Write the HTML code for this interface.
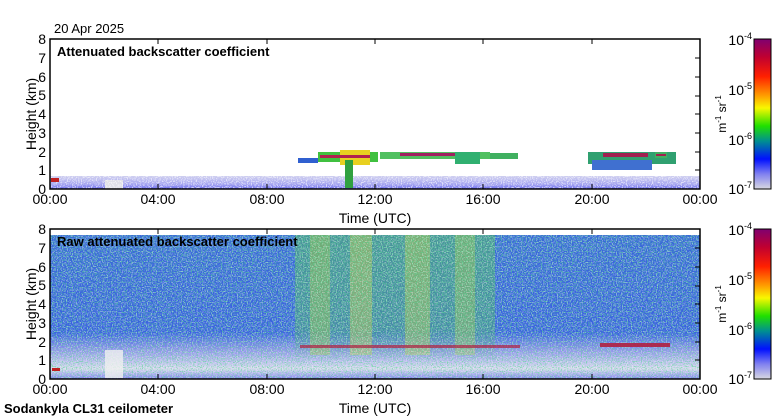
<!DOCTYPE html>
<html><head><meta charset="utf-8"><style>
html,body{margin:0;padding:0;background:#fff;}
svg{display:block;font-family:"Liberation Sans",sans-serif;}
</style></head><body>
<svg width="780" height="420" viewBox="0 0 780 420" xmlns="http://www.w3.org/2000/svg">
<defs>
<linearGradient id="cb" x1="0" y1="0" x2="0" y2="1">
<stop offset="0" stop-color="#800070"/><stop offset="0.12" stop-color="#c00030"/>
<stop offset="0.25" stop-color="#ff2000"/><stop offset="0.38" stop-color="#ffa000"/>
<stop offset="0.46" stop-color="#f8f800"/><stop offset="0.58" stop-color="#20e000"/>
<stop offset="0.68" stop-color="#009090"/><stop offset="0.8" stop-color="#0010ff"/>
<stop offset="0.9" stop-color="#8080f0"/><stop offset="1" stop-color="#d8d8e0"/>
</linearGradient>
<linearGradient id="low" x1="0" y1="0" x2="0" y2="1">
<stop offset="0" stop-color="#d0d0f0"/><stop offset="0.6" stop-color="#a8a8f0"/><stop offset="1" stop-color="#7070f0"/>
</linearGradient>
<linearGradient id="rawv" x1="0" y1="0" x2="0" y2="1">
<stop offset="0" stop-color="#3a6ad8"/><stop offset="0.68" stop-color="#3a62e0"/>
<stop offset="0.8" stop-color="#9094ec"/><stop offset="0.93" stop-color="#d8d8f0"/><stop offset="1" stop-color="#8080f0"/>
</linearGradient>
<linearGradient id="grn" x1="0" y1="0" x2="0" y2="1">
<stop offset="0" stop-color="#50b070" stop-opacity="0.6"/><stop offset="0.75" stop-color="#50b070" stop-opacity="0.5"/><stop offset="1" stop-color="#50b070" stop-opacity="0"/>
</linearGradient>
<filter id="nz" x="0" y="0" width="100%" height="100%">
<feTurbulence type="fractalNoise" baseFrequency="0.8" numOctaves="1" seed="3"/>
<feColorMatrix type="matrix" values="0 0 0 0 1  0 0 0 0 1  0 0 0 0 1  9 0 0 0 -4.6"/>
</filter>
<filter id="nz2" x="0" y="0" width="100%" height="100%">
<feTurbulence type="fractalNoise" baseFrequency="0.8" numOctaves="1" seed="11"/>
<feColorMatrix type="matrix" values="0 0 0 0 0.1  0 0 0 0 0.7  0 0 0 0 0.3  9 0 0 0 -4.6"/>
</filter>
</defs>
<text x="54" y="33" font-size="13">20 Apr 2025</text>

<rect x="50" y="39" width="650" height="150" fill="#fff"/>
<rect x="50" y="176" width="650" height="13" fill="url(#low)"/>
<rect x="105" y="180" width="18" height="9" fill="#e0e0e8"/>
<rect x="50" y="176" width="650" height="13" fill="#fff" filter="url(#nz)" opacity="0.6"/>
<rect x="51" y="178" width="8" height="4" fill="#c02020"/>
<g>
<rect x="318" y="152" width="60" height="10" fill="#40c040"/>
<rect x="340" y="150" width="30" height="15" fill="#e8d020"/>
<rect x="320" y="155" width="50" height="3" fill="#b02050"/>
<rect x="345" y="160" width="8" height="28" fill="#30a040"/>
<rect x="380" y="152" width="110" height="7" fill="#50c060"/>
<rect x="400" y="153" width="60" height="3" fill="#a02060"/>
<rect x="455" y="152" width="25" height="12" fill="#30b070"/>
<rect x="490" y="153" width="28" height="6" fill="#40b060"/>
<rect x="298" y="158" width="20" height="5" fill="#3060d0"/>
<rect x="588" y="152" width="88" height="12" fill="#30a070"/>
<rect x="592" y="160" width="60" height="10" fill="#4070d0"/>
<rect x="603" y="153" width="45" height="4" fill="#a02050"/>
<rect x="655" y="152" width="12" height="6" fill="#40b060"/>
<rect x="656" y="154" width="10" height="2" fill="#a02050"/>
</g>
<text x="57" y="56" font-size="13" font-weight="bold">Attenuated backscatter coefficient</text>
<rect x="50" y="39" width="650" height="150" fill="none" stroke="#000" stroke-width="1.5"/>

<rect x="50" y="235" width="650" height="144" fill="url(#rawv)"/>
<rect x="295" y="235" width="200" height="125" fill="url(#grn)"/>
<rect x="310" y="235" width="20" height="120" fill="#b0d040" opacity="0.4"/>
<rect x="350" y="235" width="22" height="120" fill="#d8d840" opacity="0.4"/>
<rect x="405" y="235" width="25" height="120" fill="#c8d840" opacity="0.4"/>
<rect x="455" y="235" width="20" height="120" fill="#b8d840" opacity="0.35"/>
<rect x="50" y="235" width="650" height="144" fill="#fff" filter="url(#nz2)" opacity="0.6"/>
<rect x="50" y="235" width="650" height="144" fill="#fff" filter="url(#nz)" opacity="0.35"/>
<rect x="105" y="350" width="18" height="28" fill="#f0f0f0" opacity="0.8"/>
<rect x="300" y="345" width="220" height="3" fill="#b02040" opacity="0.7"/>
<rect x="600" y="343" width="70" height="4" fill="#b02040" opacity="0.9"/>
<rect x="52" y="368" width="8" height="3" fill="#c02020"/>
<text x="57" y="246" font-size="13" font-weight="bold">Raw attenuated backscatter coefficient</text>
<rect x="50" y="229" width="650" height="150" fill="none" stroke="#000" stroke-width="1.5"/>

<g font-size="14" text-anchor="end">
<text x="46" y="194">0</text><text x="46" y="175">1</text><text x="46" y="157">2</text><text x="46" y="138">3</text><text x="46" y="119">4</text><text x="46" y="100">5</text><text x="46" y="82">6</text><text x="46" y="63">7</text><text x="46" y="44">8</text>
<text x="46" y="384">0</text><text x="46" y="365">1</text><text x="46" y="347">2</text><text x="46" y="328">3</text><text x="46" y="309">4</text><text x="46" y="290">5</text><text x="46" y="272">6</text><text x="46" y="253">7</text><text x="46" y="234">8</text>
</g>
<g stroke="#000" stroke-width="1">
<path d="M158 39v5M267 39v5M375 39v5M483 39v5M592 39v5M158 189v-5M267 189v-5M375 189v-5M483 189v-5M592 189v-5"/>
<path d="M158 229v5M267 229v5M375 229v5M483 229v5M592 229v5M158 379v-5M267 379v-5M375 379v-5M483 379v-5M592 379v-5"/>
<path d="M695 58h5M695 77h5M695 96h5M695 114h5M695 133h5M695 152h5M695 170h5M695 248h5M695 267h5M695 286h5M695 304h5M695 323h5M695 342h5M695 360h5"/>
</g>
<g font-size="14" text-anchor="middle">
<text x="50" y="204">00:00</text><text x="158" y="204">04:00</text><text x="267" y="204">08:00</text><text x="375" y="204">12:00</text><text x="483" y="204">16:00</text><text x="592" y="204">20:00</text><text x="700" y="204">00:00</text>
<text x="375" y="223">Time (UTC)</text>
<text x="50" y="394">00:00</text><text x="158" y="394">04:00</text><text x="267" y="394">08:00</text><text x="375" y="394">12:00</text><text x="483" y="394">16:00</text><text x="592" y="394">20:00</text><text x="700" y="394">00:00</text>
<text x="375" y="413">Time (UTC)</text>
</g>
<text font-size="14" transform="translate(36,114) rotate(-90)" text-anchor="middle">Height (km)</text>
<text font-size="14" transform="translate(36,304) rotate(-90)" text-anchor="middle">Height (km)</text>
<text x="4" y="413" font-size="13" font-weight="bold">Sodankyla CL31 ceilometer</text>

<rect x="754" y="39" width="17" height="150" fill="url(#cb)" stroke="#000"/>
<rect x="754" y="229" width="17" height="150" fill="url(#cb)" stroke="#000"/>
<g font-size="14" text-anchor="end">
<text x="752" y="45">10<tspan font-size="9" dy="-6">-4</tspan></text>
<text x="752" y="95">10<tspan font-size="9" dy="-6">-5</tspan></text>
<text x="752" y="145">10<tspan font-size="9" dy="-6">-6</tspan></text>
<text x="752" y="194">10<tspan font-size="9" dy="-6">-7</tspan></text>
<text x="752" y="235">10<tspan font-size="9" dy="-6">-4</tspan></text>
<text x="752" y="285">10<tspan font-size="9" dy="-6">-5</tspan></text>
<text x="752" y="335">10<tspan font-size="9" dy="-6">-6</tspan></text>
<text x="752" y="384">10<tspan font-size="9" dy="-6">-7</tspan></text>
</g>
<text font-size="12" transform="translate(726,114) rotate(-90)" text-anchor="middle">m<tspan font-size="8" dy="-5">-1</tspan><tspan dy="5"> sr</tspan><tspan font-size="8" dy="-5">-1</tspan></text>
<text font-size="12" transform="translate(726,304) rotate(-90)" text-anchor="middle">m<tspan font-size="8" dy="-5">-1</tspan><tspan dy="5"> sr</tspan><tspan font-size="8" dy="-5">-1</tspan></text>
</svg>
</body></html>
